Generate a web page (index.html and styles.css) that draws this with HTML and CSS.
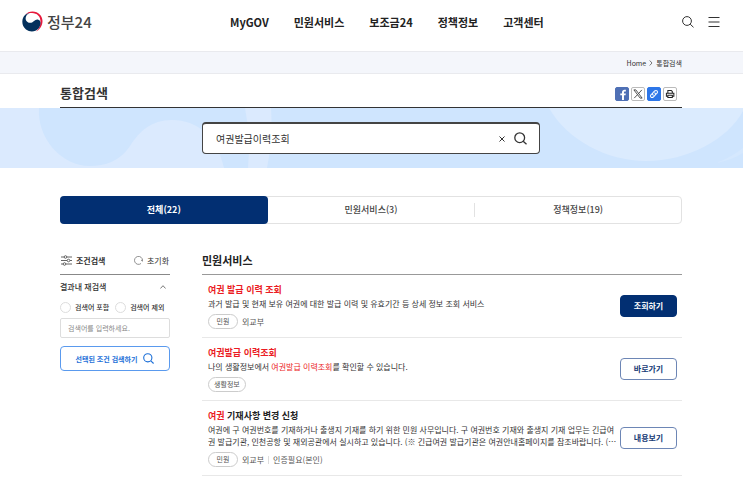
FILE: index.html
```html
<!DOCTYPE html>
<html lang="ko">
<head>
<meta charset="utf-8">
<meta name="viewport" content="width=device-width, initial-scale=1">
<title>통합검색 | 정부24</title>
<link rel="stylesheet" href="styles.css">
</head>
<body>
<header class="header">
  <a class="logo" href="#">
    <svg class="logo-mark" viewBox="0 0 42 42" aria-hidden="true">
      <path fill="#e6193c" d="M6 8C10 3 15 1 21 1c12 0 20 9 20 19 0 9-5 17-13 21 6-5 9-12 9-20C37 11 30 4 20 4 14 4 10 5 6 8z"/>
      <path fill="#03305c" d="M15 5C8 5 4 9 2 14-1 22 1 31 8 37c8 6 19 5 25-2 4-5 5-11 3-15-3-4-8-4-12 0-4 4-9 5-13 2C7 19 6 14 9 9c1-2 3-3 6-4z"/>
    </svg>
    <span>정부24</span>
  </a>
  <nav class="gnb">
    <a href="#">MyGOV</a>
    <a href="#">민원서비스</a>
    <a href="#">보조금24</a>
    <a href="#">정책정보</a>
    <a href="#">고객센터</a>
  </nav>
  <div class="tools">
    <button type="button" class="icon-button" aria-label="검색">
      <svg width="12" height="12" viewBox="0 0 12 12" fill="none" stroke="#333"><circle cx="5" cy="5" r="4.4"/><path d="M8.2 8.2l3.3 3.1"/></svg>
    </button>
    <button type="button" class="icon-button" aria-label="전체메뉴">
      <svg width="12" height="12" viewBox="0 0 12 12" fill="none" stroke="#333"><path d="M.5 1.5h11M.5 6h11M.5 10.5h11"/></svg>
    </button>
  </div>
</header>

<div class="crumbs">
  <a href="#">Home</a>
  <svg width="4" height="6" viewBox="0 0 4 6" fill="none" stroke="#555" stroke-width=".8"><path d="M.7.5L3 3 .7 5.500"/></svg>
  <span>통합검색</span>
</div>

<main>
  <div class="title-row wrap">
    <h1>통합검색</h1>
    <div class="share">
      <button type="button" class="share-button facebook" aria-label="페이스북">
        <svg viewBox="0 0 14 14"><path fill="#fff" d="M7 14V8.600H5V6.500h2V5c0-2 1.200-3 3-3h1.500v2H10.400c-.8 0-1.100.4-1.100 1v1.500h2.200l-.4 2.100H9.300V14z"/></svg>
      </button>
      <button type="button" class="share-button" aria-label="X">
        <svg viewBox="0 0 14 14" fill="none" stroke="#222" stroke-width=".9"><path d="M2.200 2.200h2.300l7.300 9.600H9.500zM11.500 2.200L7.700 6.500M6.300 7.900L2.600 11.800"/></svg>
      </button>
      <button type="button" class="share-button link" aria-label="링크 복사">
        <svg viewBox="0 0 14 14" fill="none" stroke="#fff" stroke-width="1.200" stroke-linecap="round"><path d="M6.100 8.300c-1.200-1-1-2.100-.2-2.900l1.900-1.900c2-1.700 4.400.6 2.800 2.600L9.400 7.300M7.900 5.700c1.200 1 1 2.100.2 2.900l-1.900 1.900c-2 1.700-4.400-.6-2.800-2.600l1.200-1.200"/></svg>
      </button>
      <button type="button" class="share-button" aria-label="인쇄">
        <svg viewBox="0 0 14 14" fill="none" stroke="#222" stroke-width="1.200"><path d="M4.500 5.500V3h4l1.200 1v1.500M4.500 9.500h-1.700V6h8.700v3.500H9.700M4.500 8.500h5.200v2.700H4.500z"/></svg>
      </button>
    </div>
  </div>

  <div class="banner">
    <svg class="banner-art" viewBox="0 0 743 60" preserveAspectRatio="none" aria-hidden="true">
      <path fill="#cfe5fe" d="M39 0H245Q251 30 248 60H224C217 28 197 12 172 12C151 12 139 24 130 38C120 53 105 58 90 58C61 58 37 30 39 0z"/>
      <path fill="#cfe5fe" d="M271 0H743V60H267Q273 30 271 0z"/>
      <path fill="#dbebfe" d="M549 0C567 32 607 53 646 53C688 53 728 31 743 3V0z"/>
      <path fill="#d5e8fe" d="M716 55Q732 49 743 40V45Q732 52 716 55z"/>
    </svg>
    <form class="search">
      <input type="text" aria-label="검색어" value="여권발급이력조회">
      <button type="button" class="icon-button" aria-label="지우기">
        <svg width="6" height="6" viewBox="0 0 6 6" stroke="#333"><path d="M.5.5l5 5M5.500.5l-5 5"/></svg>
      </button>
      <button type="button" class="icon-button" aria-label="검색">
        <svg width="13" height="13" viewBox="0 0 13 13" fill="none" stroke="#333" stroke-width="1.300"><circle cx="5.700" cy="5.700" r="4.900"/><path d="M9.200 9.200l3.300 3.100"/></svg>
      </button>
    </form>
  </div>

  <div class="wrap">
    <nav class="tabs">
      <a class="tab active" href="#">전체(22)</a>
      <a class="tab" href="#">민원서비스(3)</a>
      <a class="tab" href="#">정책정보(19)</a>
    </nav>

    <div class="columns">
      <aside class="filter">
        <div class="filter-head">
          <svg width="11" height="11" viewBox="0 0 11 11" fill="none" stroke="#555" stroke-width=".9"><path d="M0 2h3M6 2h5M0 5.500h6M9 5.500h2M0 9h2M5 9h6"/><circle cx="4.500" cy="2" r="1.300"/><circle cx="7.500" cy="5.500" r="1.300"/><circle cx="3.500" cy="9" r="1.300"/></svg>
          <h2>조건검색</h2>
          <button type="button" class="reset">
            <svg width="9" height="9" viewBox="0 0 9 9" fill="none" stroke="#777" stroke-width=".8"><path d="M7 7.500A4 4 0 1 1 8.500 4.500M7 4l1.500 1.200L9 3.500"/></svg>
            초기화
          </button>
        </div>
        <button type="button" class="fold">
          결과내 재검색
          <svg width="6" height="4" viewBox="0 0 6 4" fill="none" stroke="#555" stroke-width=".8"><path d="M.4 3.500L3 .7l2.600 2.800"/></svg>
        </button>
        <div class="radios">
          <label><input type="radio" name="mode">검색어 포함</label>
          <label><input type="radio" name="mode">검색어 제외</label>
        </div>
        <input class="keyword" type="text" aria-label="재검색어" placeholder="검색어를 입력하세요.">
        <button type="button" class="apply">
          선택된 조건 검색하기
          <svg width="11" height="11" viewBox="0 0 11 11" fill="none" stroke="#1d70d8" stroke-width="1.100"><circle cx="4.800" cy="4.800" r="4.100"/><path d="M7.800 7.800l2.800 2.700"/></svg>
        </button>
      </aside>

      <section class="results">
        <h2>민원서비스</h2>
        <ul>
          <li>
            <div class="info">
              <h3><a href="#"><em>여권 발급 이력 조회</em></a></h3>
              <p>과거 발급 및 현재 보유 여권에 대한 발급 이력 및 유효기간 등 상세 정보 조회 서비스</p>
              <div class="meta"><span class="badge">민원</span><span>외교부</span></div>
            </div>
            <a class="action primary" href="#">조회하기</a>
          </li>
          <li>
            <div class="info">
              <h3><a href="#"><em>여권발급 이력조회</em></a></h3>
              <p>나의 생활정보에서 <em>여권발급 이력조회</em>를 확인할 수 있습니다.</p>
              <div class="meta"><span class="badge">생활정보</span></div>
            </div>
            <a class="action" href="#">바로가기</a>
          </li>
          <li>
            <div class="info">
              <h3><a href="#"><em>여권</em> 기재사항 변경 신청</a></h3>
              <p>여권에 구 여권번호를 기재하거나 출생지 기재를 하기 위한 민원 사무입니다. 구 여권번호 기재와 출생지 기재 업무는 긴급여<wbr>권 발급기관, 인천공항 및 재외공관에서 실시하고 있습니다. (※ 긴급여권 발급기관은 여권안내홈페이지를 참조바랍니다. (⋯</p>
              <div class="meta"><span class="badge">민원</span><span>외교부</span><span class="divided">인증필요(본인)</span></div>
            </div>
            <a class="action" href="#">내용보기</a>
          </li>
        </ul>
      </section>
    </div>
  </div>
</main>
</body>
</html>
```
FILE: styles.css
```css
* { box-sizing: border-box; }

body {
  margin: 0;
  background: #fff;
  color: #333;
  font: 8px/12px "Noto Sans CJK KR", "Noto Sans", sans-serif;
}

a { color: inherit; text-decoration: none; }
h1, h2, h3, p, ul { margin: 0; padding: 0; }
ul { list-style: none; }
svg { display: block; flex: none; }
em { color: #eb1c24; font-style: normal; }
input, button { font: inherit; color: inherit; }
button { padding: 0; border: 0; background: none; }

.wrap { padding: 0 61px 0 60px; }

.header {
  display: grid;
  grid-template-columns: 208px 1fr auto;
  align-items: center;
  height: 51px;
  padding: 0 23px 8px 22px;
}
.logo {
  display: flex;
  align-items: center;
  gap: 4px;
  color: #444;
  font-size: 15px;
  font-weight: 500;
  line-height: 20px;
}
.logo-mark { width: 21px; height: 21px; }
.gnb {
  display: flex;
  gap: 25px;
  color: #222;
  font-size: 11px;
  font-weight: 700;
  line-height: 16px;
  white-space: nowrap;
}
.tools { display: flex; gap: 14px; }

.crumbs {
  display: flex;
  align-items: center;
  justify-content: flex-end;
  gap: 3px;
  height: 23px;
  padding: 0 61px;
  border: solid #e9eaee;
  border-width: 1px 0;
  background: #f4f6fb;
  font-size: 7px;
}

.title-row { display: flex; }
.title-row h1,
.share {
  height: 34px;
  border-bottom: 1px solid #333;
}
.title-row h1 {
  flex: 1;
  padding-top: 10px;
  font-size: 13px;
  font-weight: 700;
  line-height: 18px;
}
.share { display: flex; gap: 2px; padding: 13px 5px 0 0; }
.share-button {
  width: 14px;
  height: 14px;
  border: 1px solid #bbb;
  border-radius: 2px;
  background: #fff;
}
.facebook { border-color: #4f70b5; background: #4f70b5; }
.link { border-color: #2d76e8; background: #2d76e8; }

.banner {
  position: relative;
  height: 60px;
  padding: 14px 203px 0 202px;
  background: #dbeafe;
}
.banner-art {
  position: absolute;
  inset: 0;
  width: 100%;
  height: 100%;
}
.search {
  position: relative;
  display: flex;
  align-items: center;
  gap: 9px;
  height: 32px;
  padding: 0 12px 0 13px;
  border: 1px solid #444;
  border-width: 2px 1px 1px;
  border-radius: 4px;
  background: #fff;
}
.search input {
  flex: 1;
  min-width: 0;
  padding: 0;
  border: 0;
  outline: 0;
  background: none;
  font-size: 10px;
  line-height: 16px;
}

.tabs {
  display: grid;
  grid-template-columns: repeat(3, 1fr);
  align-items: center;
  margin-top: 28px;
  border: 1px solid #e2e2e2;
  border-radius: 4px;
  color: #444;
  font-size: 9px;
  font-weight: 500;
  line-height: 14px;
  text-align: center;
}
.tab + .tab + .tab { border-left: 1px solid #e2e2e2; }
.tab.active {
  margin: -1px 0 -1px -1px;
  padding: 7px 0;
  border-radius: 4px;
  background: #022f72;
  color: #fff;
  font-weight: 700;
}

.columns {
  display: grid;
  grid-template-columns: 110px 1fr;
  gap: 32px;
  margin-top: 28px;
  align-items: start;
}

.filter-head {
  display: flex;
  align-items: center;
  gap: 4px;
  height: 23px;
  padding: 0 1px 5px 1px;
  border-bottom: 1px solid #888;
}
.filter-head h2 { font-size: 8px; font-weight: 700; line-height: 12px; }
.reset { display: flex; align-items: center; gap: 4px; margin-left: auto; }
.fold {
  display: flex;
  align-items: center;
  justify-content: space-between;
  width: 100%;
  height: 24px;
  padding: 0 4px 0 0;
  font-weight: 500;
}
.radios {
  display: flex;
  gap: 6px;
  margin-top: 2px;
  font-size: 7px;
  font-weight: 500;
  white-space: nowrap;
}
.radios label { display: flex; align-items: center; gap: 4px; }
.radios input {
  appearance: none;
  width: 11px;
  height: 11px;
  margin: 0;
  border: 1px solid #ddd;
  border-radius: 50%;
}
.keyword {
  display: block;
  width: 100%;
  height: 20px;
  margin-top: 5px;
  padding: 0 7px;
  border: 1px solid #ddd;
  border-radius: 2px;
  font-size: 7px;
}
.keyword::placeholder { color: #888; }
.apply {
  display: flex;
  align-items: center;
  justify-content: center;
  gap: 6px;
  width: 100%;
  height: 25px;
  margin-top: 8px;
  border: 1px solid #5a9aee;
  border-radius: 4px;
  color: #1d70d8;
  font-size: 7px;
  font-weight: 700;
}

.results h2 {
  height: 23px;
  border-bottom: 1px solid #999;
  color: #222;
  font-size: 11px;
  font-weight: 700;
  line-height: 16px;
}
.results li {
  display: flex;
  align-items: center;
  padding: 8px 5px 8px 6px;
  border-bottom: 1px solid #e8e8e8;
}
.info { flex: 1; min-width: 0; }
.info h3 { color: #222; font-size: 9px; font-weight: 700; line-height: 13px; }
.info p { margin: 2px 0 4px; word-break: keep-all; }
.meta { display: flex; align-items: center; gap: 4px; color: #555; }
.badge {
  min-width: 30px;
  height: 15px;
  padding: 0 5px;
  border: 1px solid #ccc;
  border-radius: 8px;
  color: #555;
  font-size: 7px;
  line-height: 13px;
  text-align: center;
}
.divided {
  padding-left: 4px;
  border-left: 1px solid #ddd;
  line-height: 8px;
}
.action {
  width: 57px;
  height: 22px;
  border: 1px solid #6d86b5;
  border-radius: 4px;
  color: #173b76;
  font-weight: 700;
  line-height: 20px;
  text-align: center;
}
.action.primary { border-color: #022f72; background: #022f72; color: #fff; }
```
